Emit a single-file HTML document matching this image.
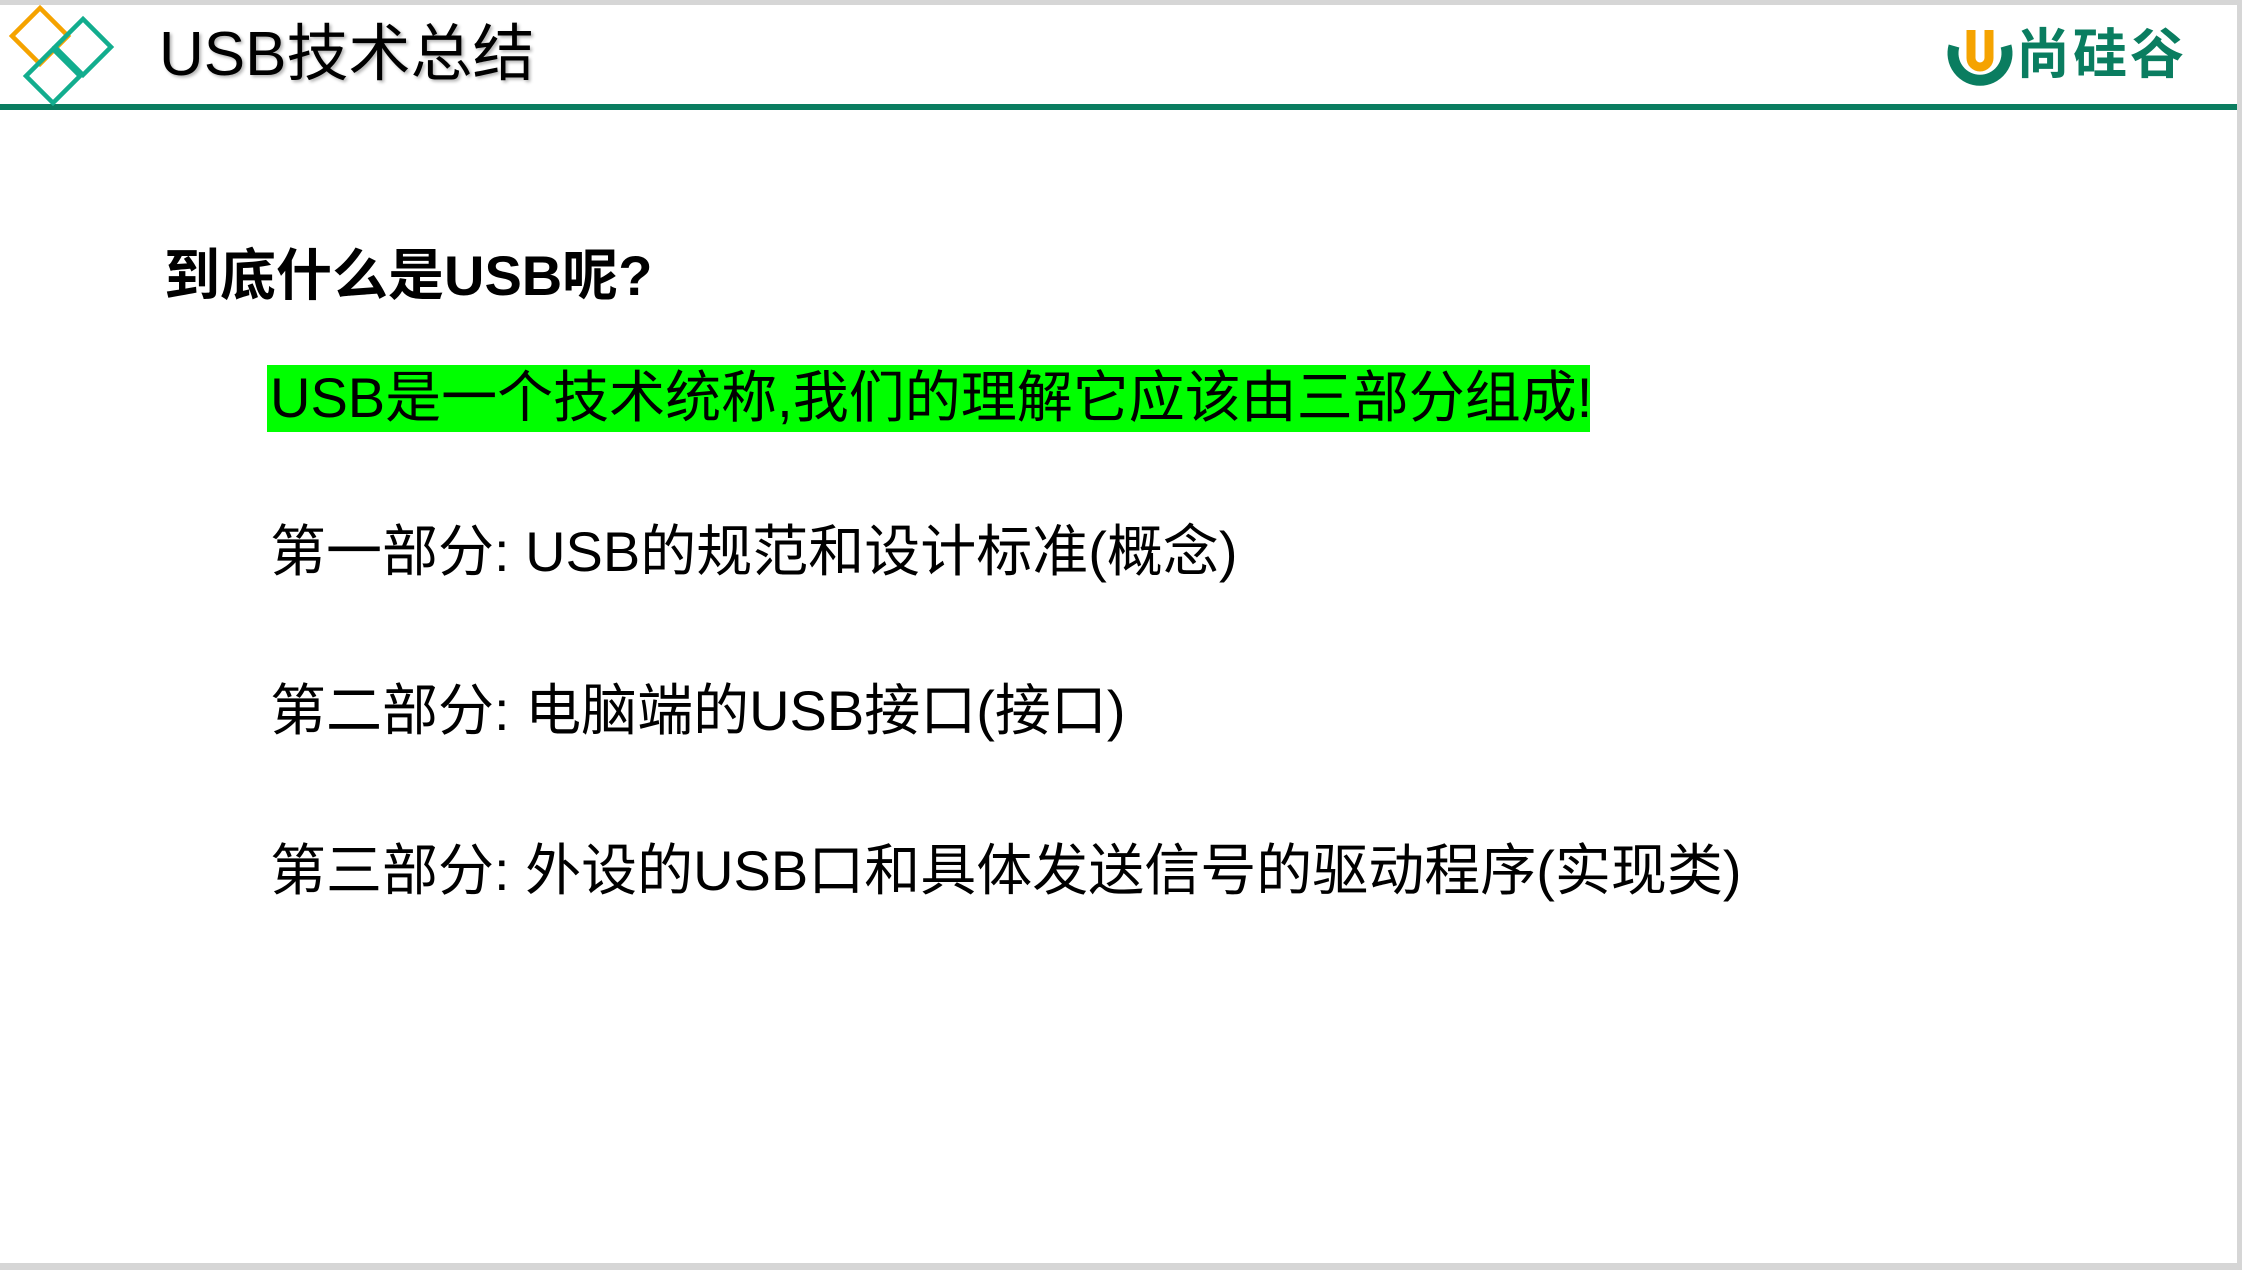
<!DOCTYPE html>
<html><head><meta charset="utf-8"><style>
html,body{margin:0;padding:0}
body{width:2242px;height:1270px;position:relative;overflow:hidden;background:#d6d6d6;font-family:"Liberation Sans","Noto Sans CJK SC",sans-serif;color:#000}
.slide{position:absolute;left:0;top:5px;width:2237px;height:1258px;background:#fff}
.bar{position:absolute;left:0;top:104px;width:2237px;height:6px;background:#0a7d60}
.t{position:absolute;white-space:nowrap;line-height:1}
</style></head><body>
<div class="slide"></div>
<div class="bar"></div>
<svg style="position:absolute;left:0;top:0" width="130" height="110">
<polygon points="40,8 68,36 40,64 12,36" fill="none" stroke="#f5a300" stroke-width="4.5"/>
<polygon points="83,19 111,47 83,75 55,47" fill="none" stroke="#12ad8e" stroke-width="4.5"/>
<polygon points="53,49 80,76 53,103 26,76" fill="none" stroke="#12ad8e" stroke-width="4.5"/>
</svg>
<div class="t" style="left:159px;top:24px;font-size:62px;text-shadow:2px 2px 3px rgba(0,0,0,.3)">USB技术总结</div>
<svg style="position:absolute;left:1946px;top:24px" width="68" height="68">
<path d="M8,22 A27,27 0 1 0 60,22" fill="none" stroke="#0a7d60" stroke-width="11"/>
<path d="M25,6 V34 A9,9 0 0 0 43,34 V6" fill="none" stroke="#f5a300" stroke-width="9"/>
</svg>
<div class="t" style="left:2016px;top:28px;font-size:54px;color:#0a7d60;letter-spacing:3px;font-weight:bold">尚硅谷</div>
<div class="t" style="left:164px;top:248px;font-size:56px;font-weight:bold">到底什么是USB呢?</div>
<div style="position:absolute;left:267px;top:365px;width:1323px;height:67px;background:#00ff00"></div>
<div class="t" style="left:270px;top:370px;font-size:56px">USB是一个技术统称,我们的理解它应该由三部分组成!</div>
<div class="t" style="left:270px;top:524px;font-size:56px">第一部分: USB的规范和设计标准(概念)</div>
<div class="t" style="left:270px;top:683px;font-size:56px">第二部分: 电脑端的USB接口(接口)</div>
<div class="t" style="left:270px;top:843px;font-size:56px">第三部分: 外设的USB口和具体发送信号的驱动程序(实现类)</div>
</body></html>
